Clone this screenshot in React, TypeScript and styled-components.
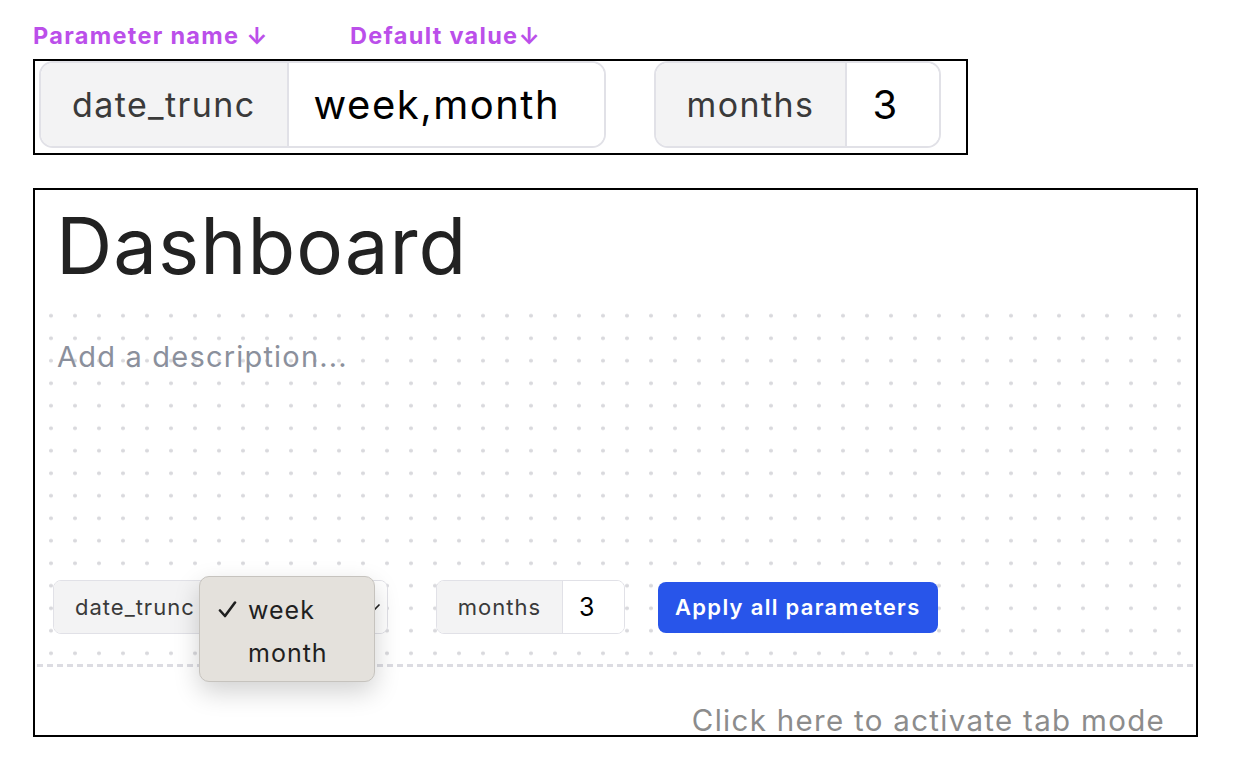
import React from "react";
import styled, { createGlobalStyle } from "styled-components";

type Size = "lg" | "sm";

const GlobalStyle = createGlobalStyle`
  body {
    margin: 0;
    background: #ffffff;
    font-family: Inter, "Noto Sans", sans-serif;
  }
`;

function Param({
  name,
  value,
  size,
  valueWidth,
  children,
}: {
  name: string;
  value?: string;
  size: Size;
  valueWidth: number;
  children?: React.ReactNode;
}) {
  return (
    <ParamBox size={size}>
      <ParamName size={size}>{name}</ParamName>
      <ParamValue size={size} style={{ width: valueWidth }}>
        {value}
      </ParamValue>
      {children}
    </ParamBox>
  );
}

export default function App() {
  return (
    <Page>
      <GlobalStyle />
      <Hints>
        <Hint width={317}>Parameter name ↓</Hint>
        <Hint>Default value↓</Hint>
      </Hints>

      <TopFrame>
        <Param name="date_trunc" value="week,month" size="lg" valueWidth={315} />
        <Param name="months" value="3" size="lg" valueWidth={92} />
      </TopFrame>

      <DashFrame>
        <Title>Dashboard</Title>
        <DottedArea>
          <Description>Add a description...</Description>
          <ParamRow>
            <Param name="date_trunc" size="sm" valueWidth={170}>
              <Chevron width="12" height="8" viewBox="0 0 12 8">
                <path d="M1.5 1.5 L6 6 L10.5 1.5" fill="none" stroke="#222" strokeWidth="1.6" />
              </Chevron>
              <Menu>
                <MenuItem>
                  <Check>
                    <svg width="19" height="17" viewBox="0 0 19 17">
                      <path
                        d="M2 9.5 L7 15 L17 1.5"
                        fill="none"
                        stroke="#1f1f1f"
                        strokeWidth="2.6"
                        strokeLinecap="round"
                        strokeLinejoin="round"
                      />
                    </svg>
                  </Check>
                  week
                </MenuItem>
                <MenuItem>
                  <Check />
                  month
                </MenuItem>
              </Menu>
            </Param>
            <Param name="months" value="3" size="sm" valueWidth={61} />
            <ApplyButton>Apply all parameters</ApplyButton>
          </ParamRow>
        </DottedArea>
        <Divider />
        <Footer>Click here to activate tab mode</Footer>
      </DashFrame>
    </Page>
  );
}

const Page = styled.div`
  padding: 20px 0 0 33px;
`;

const Hints = styled.div`
  display: flex;
  height: 30px;
  margin-bottom: 9px;
  align-items: center;
`;

const Hint = styled.div<{ width?: number }>`
  width: ${({ width }) => (width ? `${width}px` : "auto")};
  font-size: 23.5px;
  font-weight: 700;
  color: #bb4fea;
  letter-spacing: 1.3px;
`;

const TopFrame = styled.div`
  box-sizing: border-box;
  width: 935px;
  height: 96px;
  border: 2px solid #000;
  padding: 0 4px 5px 4px;
  display: flex;
  gap: 48px;
`;

const ParamBox = styled.div<{ size: Size }>`
  position: relative;
  box-sizing: border-box;
  display: flex;
  height: ${({ size }) => (size === "lg" ? "87px" : "54px")};
  border: ${({ size }) => (size === "lg" ? "2.5px" : "1.5px")} solid #e1e1e7;
  border-radius: ${({ size }) => (size === "lg" ? "14px" : "8px")};
`;

const ParamName = styled.div<{ size: Size }>`
  display: flex;
  align-items: center;
  padding: ${({ size }) => (size === "lg" ? "0 31px" : "0 21px")};
  background: #f3f3f4;
  border-right: ${({ size }) => (size === "lg" ? "2px" : "1.5px")} solid #e1e1e7;
  border-radius: ${({ size }) => (size === "lg" ? "12px 0 0 12px" : "7px 0 0 7px")};
  color: #3a3a3a;
  font-size: ${({ size }) => (size === "lg" ? "34px" : "22px")};
  letter-spacing: ${({ size }) => (size === "lg" ? "1.4px" : "1px")};
`;

const ParamValue = styled.div<{ size: Size }>`
  box-sizing: border-box;
  display: flex;
  align-items: center;
  padding: ${({ size }) => (size === "lg" ? "0 25px" : "0 16px")};
  color: #000;
  font-size: ${({ size }) => (size === "lg" ? "40px" : "25px")};
  letter-spacing: ${({ size }) => (size === "lg" ? "1.5px" : "1px")};
  background: #fff;
  border-radius: ${({ size }) => (size === "lg" ? "0 12px 12px 0" : "0 7px 7px 0")};
`;

const Chevron = styled.svg`
  position: absolute;
  right: 6px;
  top: 22px;
`;

const Menu = styled.div`
  position: absolute;
  left: 145px;
  top: -5px;
  width: 176px;
  height: 106px;
  box-sizing: border-box;
  padding: 11px 0 0 18px;
  background: #e4e1dc;
  border: 1px solid #c6c3be;
  border-radius: 10px;
  box-shadow: 0 10px 26px rgba(0, 0, 0, 0.18);
  z-index: 2;
`;

const MenuItem = styled.div`
  display: flex;
  align-items: center;
  height: 43px;
  font-size: 25px;
  letter-spacing: 1px;
  color: #1f1f1f;
`;

const Check = styled.span`
  display: inline-flex;
  align-items: center;
  width: 30px;
`;

const DashFrame = styled.div`
  box-sizing: border-box;
  width: 1165px;
  height: 549px;
  margin-top: 33px;
  border: 2px solid #000;
  display: flex;
  flex-direction: column;
`;

const Title = styled.h1`
  flex-shrink: 0;
  margin: 17px 0 0 21px;
  font-size: 78px;
  font-weight: 400;
  line-height: 1;
  color: #222;
  letter-spacing: 1px;
`;

const DottedArea = styled.div`
  flex-shrink: 0;
  display: flex;
  flex-direction: column;
  height: 359px;
  margin-top: 20px;
  padding: 35px 0 30px 0;
  box-sizing: border-box;
  background-image: radial-gradient(circle, #d9d9dd 1.6px, transparent 2.2px);
  background-size: 24px 22.5px;
  background-position: 4px -0.5px;
`;

const Description = styled.div`
  padding-left: 22px;
  font-size: 29px;
  line-height: 34px;
  letter-spacing: 1.2px;
  color: #8b909c;
`;

const ParamRow = styled.div`
  margin-top: auto;
  padding-left: 18px;
  display: flex;
  align-items: center;
  gap: 48px;
`;

const ApplyButton = styled.button`
  margin-left: -15px;
  height: 51px;
  padding: 0 17px;
  border: none;
  border-radius: 8px;
  background: #2855ea;
  color: #fff;
  font-family: Inter, sans-serif;
  font-size: 22px;
  font-weight: 600;
  letter-spacing: 1.3px;
`;

const Divider = styled.div`
  flex-shrink: 0;
  height: 3px;
  background: repeating-linear-gradient(90deg, #dcdce2 0 6px, transparent 6px 10px);
  margin-left: 2px;
`;

const Footer = styled.div`
  padding: 39px 31px 0 0;
  text-align: right;
  font-size: 29.5px;
  line-height: 28px;
  letter-spacing: 1.3px;
  color: #8c8c8c;
`;
